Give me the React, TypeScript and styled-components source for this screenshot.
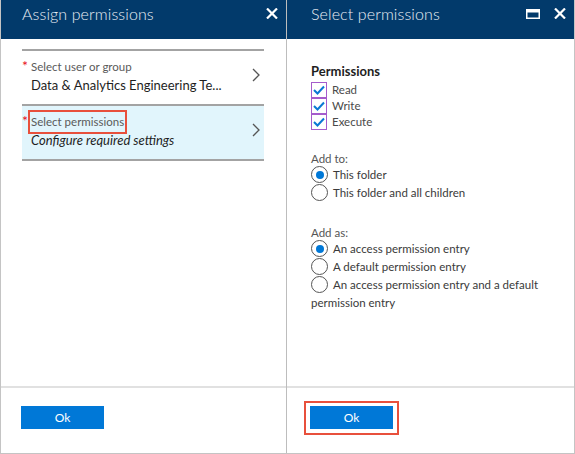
import React from "react";
import styled, { createGlobalStyle } from "styled-components";

const Global = createGlobalStyle`
  html, body { margin: 0; padding: 0; background: #fff; }
  body { font-family: Lato, "Open Sans", sans-serif; }
  * { box-sizing: border-box; }
`;

const Frame = styled.div`
  display: flex;
  width: 575px;
  height: 454px;
  border: 1px solid #c4c4c4;
  border-top: none;
  background: #fff;
`;

const Panel = styled.section<{ $w?: number }>`
  display: flex;
  flex-direction: column;
  ${(p) => (p.$w ? `width: ${p.$w}px; border-right: 1px solid #bdbdbd;` : "flex: 1;")}
  min-width: 0;
`;

const Header = styled.header`
  height: 39px;
  background: #023a6b;
  display: flex;
  align-items: center;
  padding: 0 8px 12px 21px;
  color: #eef3f8;
  flex-shrink: 0;
`;

const Title = styled.h1<{ $pl?: number }>`
  flex: 1;
  margin: 0;
  font-family: Lato, "Open Sans", sans-serif;
  font-weight: 300;
  font-size: 16px;
  line-height: 20px;
  letter-spacing: 0.1px;
  color: #e9eef4;
  padding-left: ${(p) => p.$pl ?? 0}px;
`;

const HeaderIcons = styled.div`
  display: flex;
  align-items: center;
  gap: 14px;
`;

const Body = styled.div<{ $pad: string }>`
  flex: 1;
  padding: ${(p) => p.$pad};
  color: #222;
`;

const Item = styled.div<{ $active?: boolean; $last?: boolean }>`
  display: flex;
  align-items: center;
  border-top: 2px solid #a3a3a3;
  ${(p) => (p.$last ? "border-bottom: 2px solid #a3a3a3;" : "")}
  background: ${(p) => (p.$active ? "#e1f5fc" : "transparent")};
  padding: 9px 4px 10px 0;
`;

const ItemText = styled.div`
  flex: 1;
  min-width: 0;
`;

const LabelRow = styled.div`
  display: flex;
  align-items: center;
  height: 14px;
`;

const Star = styled.span`
  width: 9px;
  color: #e81123;
  font-size: 14px;
  line-height: 14px;
  align-self: flex-start;
  margin-top: -1px;
`;

const Label = styled.span<{ $boxed?: boolean }>`
  font-size: 11.5px;
  line-height: 14px;
  color: #5a5a5a;
  ${(p) =>
    p.$boxed
      ? `border: 2px solid #e8503c; padding: 3px 1px; margin: -5px 0 -5px -3px;`
      : ""}
`;

const Value = styled.div<{ $italic?: boolean }>`
  margin-top: 2px;
  padding-left: 9px;
  font-size: 13px;
  line-height: 18px;
  color: #1e1e1e;
  font-style: ${(p) => (p.$italic ? "italic" : "normal")};
  white-space: nowrap;
  overflow: hidden;
`;

const Chevron = styled.svg`
  width: 8px;
  height: 14px;
  margin-bottom: 5px;
  flex-shrink: 0;
`;

const Heading = styled.div`
  font-size: 13px;
  font-weight: 700;
  line-height: 18px;
  color: #1e1e1e;
`;

const CheckList = styled.div`
  margin-top: 2px;
`;

const CheckRow = styled.div`
  display: flex;
  align-items: center;
  height: 16px;
  gap: 5px;
  font-size: 11.5px;
  line-height: 14px;
  color: #4a4a4a;
  padding-bottom: 1px;
`;

const Box = styled.span`
  width: 16px;
  height: 16px;
  margin-bottom: -1px;
  border: 1.5px solid #a55ccc;
  display: flex;
  align-items: center;
  justify-content: center;
`;

const Caption = styled.div<{ $mt: number }>`
  margin-top: ${(p) => p.$mt}px;
  font-size: 11.5px;
  line-height: 14px;
  color: #555;
`;

const RadioRow = styled.div`
  font-size: 11.5px;
  line-height: 18px;
  color: #3a3a3a;
`;

const Circle = styled.span<{ $on?: boolean }>`
  display: inline-flex;
  align-items: center;
  justify-content: center;
  width: 17px;
  height: 17px;
  border: 1px solid #555;
  border-radius: 50%;
  vertical-align: top;
  margin-right: 5px;
  &::after {
    content: "";
    width: 8px;
    height: 8px;
    border-radius: 50%;
    background: ${(p) => (p.$on ? "#0078d7" : "transparent")};
  }
`;

const Footer = styled.footer<{ $pl: number }>`
  height: 67px;
  border-top: 2px solid #e1e1e1;
  padding: 18px 0 0 ${(p) => p.$pl}px;
  flex-shrink: 0;
`;

const Highlight = styled.div`
  display: inline-block;
  border: 2px solid #e8503c;
  padding: 3px 4px 4px;
  margin: -5px 0 0 -6px;
`;

const OkButton = styled.button`
  display: block;
  width: 83px;
  height: 23px;
  border: none;
  background: #0078d7;
  color: #fff;
  font-family: Lato, "Open Sans", sans-serif;
  font-size: 12px;
  padding: 0;
`;

const CloseIcon = () => (
  <svg width="12" height="11" viewBox="0 0 12 11">
    <path d="M1 0.5 L11 10.5 M11 0.5 L1 10.5" stroke="#fff" strokeWidth="2.2" />
  </svg>
);

const MaxIcon = () => (
  <svg width="14" height="10" viewBox="0 0 14 10">
    <rect x="0.75" y="0.75" width="12.5" height="8.5" fill="none" stroke="#fff" strokeWidth="1.5" />
    <rect x="0" y="0" width="14" height="3.5" fill="#fff" />
  </svg>
);

const ChevronIcon = () => (
  <Chevron viewBox="0 0 8 14">
    <path d="M1 1 L7 7 L1 13" fill="none" stroke="#555" strokeWidth="1.3" />
  </Chevron>
);

const Check = () => (
  <svg width="12" height="10" viewBox="0 0 12 10">
    <path d="M1 5 L4.5 8.5 L11 1.5" fill="none" stroke="#0a78d4" strokeWidth="2" />
  </svg>
);

export default function App() {
  return (
    <>
      <Global />
      <Frame>
        <Panel $w={286}>
          <Header>
            <Title>Assign permissions</Title>
            <HeaderIcons>
              <CloseIcon />
            </HeaderIcons>
          </Header>
          <Body $pad="10px 22px 0 21px">
            <Item>
              <ItemText>
                <LabelRow>
                  <Star>*</Star>
                  <Label>Select user or group</Label>
                </LabelRow>
                <Value>Data &amp; Analytics Engineering Te...</Value>
              </ItemText>
              <ChevronIcon />
            </Item>
            <Item $active $last>
              <ItemText>
                <LabelRow>
                  <Star>*</Star>
                  <Label $boxed>Select permissions</Label>
                </LabelRow>
                <Value $italic>Configure required settings</Value>
              </ItemText>
              <ChevronIcon />
            </Item>
          </Body>
          <Footer $pl={20}>
            <OkButton>Ok</OkButton>
          </Footer>
        </Panel>
        <Panel>
          <Header>
            <Title $pl={3}>Select permissions</Title>
            <HeaderIcons>
              <MaxIcon />
              <CloseIcon />
            </HeaderIcons>
          </Header>
          <Body $pad="23px 24px 0 24px">
            <Heading>Permissions</Heading>
            <CheckList>
              {["Read", "Write", "Execute"].map((t) => (
                <CheckRow key={t}>
                  <Box>
                    <Check />
                  </Box>
                  {t}
                </CheckRow>
              ))}
            </CheckList>
            <Caption $mt={22}>Add to:</Caption>
            <RadioRow>
              <Circle $on />
              This folder
            </RadioRow>
            <RadioRow>
              <Circle />
              This folder and all children
            </RadioRow>
            <Caption $mt={24}>Add as:</Caption>
            <RadioRow>
              <Circle $on />
              An access permission entry
            </RadioRow>
            <RadioRow>
              <Circle />
              A default permission entry
            </RadioRow>
            <RadioRow>
              <Circle />
              An access permission entry and a default permission entry
            </RadioRow>
          </Body>
          <Footer $pl={23}>
            <Highlight>
              <OkButton>Ok</OkButton>
            </Highlight>
          </Footer>
        </Panel>
      </Frame>
    </>
  );
}
